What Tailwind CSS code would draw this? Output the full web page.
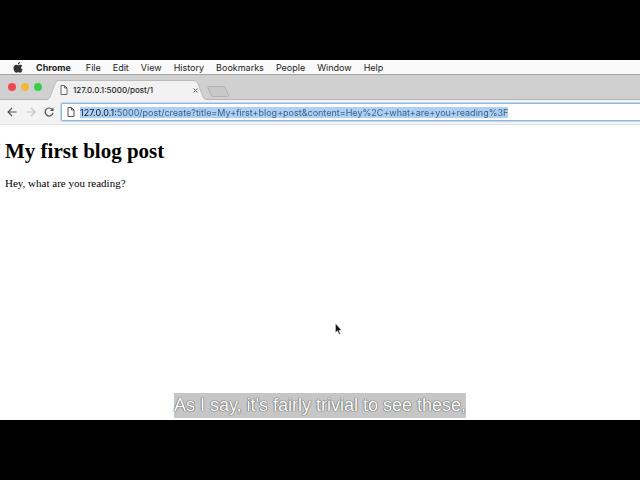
<!DOCTYPE html>
<html lang="en">
<head>
<meta charset="utf-8">
<title>127.0.0.1:5000/post/1</title>
<script src="https://cdn.jsdelivr.net/npm/@tailwindcss/browser@4"></script>
</head>
<body class="flex h-screen flex-col overflow-hidden bg-black py-[60px] font-['Inter','Liberation_Sans',sans-serif] text-[#222]">
<div class="relative flex min-h-0 flex-1 flex-col bg-white">
  <nav aria-label="Menu bar" class="flex h-[15px] shrink-0 items-center gap-3 border-b border-[#a3a3a3] bg-[#f9faf9] pl-[13px] text-[9px] leading-none">
    <button aria-label="Apple" class="mr-px"><svg class="h-[11px] w-[10px] fill-[#333]" viewBox="0 0 20 22"><path d="M14 0c.2 2.700-2 4.900-4.200 4.900C9.500 2.500 11.600.3 14 0zM18.600 7.500c-3.500 2.200-2.800 6.700.7 8-1 3-3 6-5 6-1.500 0-2-.9-3.800-.9s-2.400.9-3.800.9C3.500 21.500 1 16.500 1 12.500 1 8.300 3.600 5.700 6.400 5.700c1.800 0 3 1 4.200 1 1.200 0 2.600-1.200 4.700-1.100 1.300 0 2.500.6 3.300 1.900z"/></svg></button>
    <button class="mr-[3px] font-bold">Chrome</button>
    <button>File</button>
    <button>Edit</button>
    <button>View</button>
    <button>History</button>
    <button>Bookmarks</button>
    <button>People</button>
    <button>Window</button>
    <button>Help</button>
  </nav>

  <header class="flex h-[25px] shrink-0 items-end border-b border-[#b3b3b3] bg-[#d0d0d0]">
    <div class="flex h-full items-center gap-[5px] pr-[5px] pl-2">
      <button aria-label="Close window" class="size-2 rounded-full bg-[#ec4a50]"></button>
      <button aria-label="Minimize window" class="size-2 rounded-full bg-[#f4b63a]"></button>
      <button aria-label="Zoom window" class="size-2 rounded-full bg-[#35d047]"></button>
    </div>
    <div class="relative -mb-px flex h-5 w-[160px] items-center pr-[9px] pl-[13px]">
      <svg class="absolute inset-0 size-full" viewBox="0 0 162 20" preserveAspectRatio="none"><path d="M0 19.500C2 19 2.500 18 3 17L8.500 3Q9.500.5 12 .5H149Q151.500.5 152.500 3L158 17Q159 19.500 162 19.500V20H0z" fill="#f2f2f2"/><path d="M0 19.500C2 19 2.500 18 3 17L8.500 3Q9.500.5 12 .5H149Q151.500.5 152.500 3L158 17Q159 19.500 162 19.500" fill="none" stroke="#b0b0b0" stroke-width=".8"/></svg>
      <svg class="relative h-[10px] w-2 shrink-0" viewBox="0 0 8 10" fill="#fafafa" stroke="#666"><path d="M1 .5H4.500L7 3V9.500H1zM4.500.5V3H7"/></svg>
      <span class="relative ml-[5px] flex-1 text-[8px] leading-none font-medium whitespace-nowrap">127.0.0.1:5000/post/1</span>
      <button aria-label="Close tab" class="relative"><svg class="size-[5px]" viewBox="0 0 5 5" stroke="#555"><path d="M.5.5l4 4M4.500.5l-4 4"/></svg></button>
    </div>
    <button aria-label="New tab" class="mb-[2px]"><svg class="h-[11px] w-[23px]" viewBox="0 0 23 11"><path d="M2 .5H16.500Q18 .5 18.500 2L21.500 9Q22 10.500 20.500 10.500H6Q4.500 10.500 4 9L1 2Q.5.5 2 .5z" fill="#c8c8c8" stroke="#aaa" stroke-width=".8"/></svg></button>
  </header>

  <form class="flex h-[25px] shrink-0 items-center border-b border-[#e4e4e4] bg-[#f3f3f3] pl-[7px]">
    <button type="button" aria-label="Back"><svg class="h-[10px] w-[10px]" viewBox="0 0 10 10" fill="none" stroke="#505050" stroke-width="1.100"><path d="M9.500 5H1M5 1L1 5l4 4"/></svg></button>
    <button type="button" aria-label="Forward" class="ml-[9px]"><svg class="h-[10px] w-[10px]" viewBox="0 0 10 10" fill="none" stroke="#c4c4c4" stroke-width="1.100"><path d="M.5 5H9M5 1l4 4-4 4"/></svg></button>
    <button type="button" aria-label="Reload" class="ml-2"><svg class="h-[10px] w-[10px]" viewBox="0 0 10 10" fill="none" stroke="#505050" stroke-width="1.200"><path d="M8.200 2.500A4 4 0 1 0 9 5.800"/><path d="M9.500.5V4H6z" fill="#505050" stroke="none"/></svg></button>
    <div class="ml-[7px] flex h-[18px] min-w-0 flex-1 items-center rounded-l-[2px] border border-r-0 border-[#8db8da] bg-white pl-[5px] shadow-[0_0_0_1px_#c5d9e9]">
      <svg class="h-[10px] w-2 shrink-0" viewBox="0 0 8 10" fill="none" stroke="#555"><path d="M1 .5H4.500L7 3V9.500H1zM4.500.5V3H7"/></svg>
      <span class="ml-[5px] flex h-[11px] items-center bg-[#aed0f5]">
        <input aria-label="Address" spellcheck="false" class="field-sizing-content h-[13px] bg-linear-to-r from-[#101820] from-[36px] to-[#3c5c7c] to-[36px] bg-clip-text text-[9px] leading-[13px] text-transparent outline-none" value="127.0.0.1:5000/post/create?title=My+first+blog+post&amp;content=Hey%2C+what+are+you+reading%3F">
      </span>
    </div>
  </form>

  <main class="flex-1 px-[5px] pt-[13px] font-['Liberation_Serif',serif] text-black">
    <h1 class="text-[21px] leading-[26px] font-bold">My first blog post</h1>
    <p class="mt-[13px] text-[11px] leading-[13px]">Hey, what are you reading?</p>
  </main>

  <svg class="absolute top-[263px] left-[335px] h-[12px] w-[7px]" viewBox="0 0 7 12"><path d="M.5.5V9.500L2.500 7.700 4 11.200 5.200 10.700 3.900 7.300H6.500z" fill="#111" stroke="#ddd" stroke-width=".5"/></svg>
  <p class="absolute bottom-[2px] left-1/2 -translate-x-1/2 bg-[#c6c6c6] font-['Liberation_Sans',sans-serif] text-[18px] leading-[25px] whitespace-nowrap text-white [text-shadow:0_0_1px_#555,0_0_1px_#555,0_0_1px_#777]">As I say, it's fairly trivial to see these,</p>
</div>
</body>
</html>
